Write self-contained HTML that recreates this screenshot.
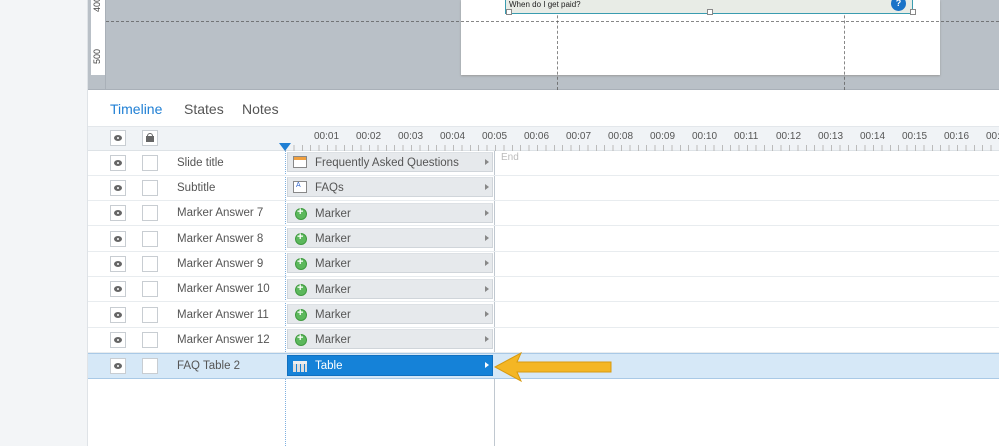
<!DOCTYPE html><html><head><style>
*{margin:0;padding:0;box-sizing:border-box}
body{width:999px;height:446px;overflow:hidden;background:#fff;font-family:"Liberation Sans",sans-serif;position:relative;color:#555}
.a{position:absolute}
.row{position:absolute;left:88px;width:911px;height:25px;border-bottom:1px solid #e8ecef}
.eye{position:absolute;left:22px;top:4px;width:16px;height:16px;border:1px solid #c8cdd2;background:#fff}
.eye:after{content:"";position:absolute;left:3px;top:4px;width:8px;height:6px;border-radius:50%;background:#666}
.eye:before{content:"";position:absolute;left:6px;top:6px;width:2px;height:2px;background:#fff;border-radius:50%;z-index:2}
.lk{position:absolute;left:54px;top:4px;width:16px;height:16px;border:1px solid #c8cdd2;background:#fff}
.nm{position:absolute;left:89px;top:6px;font-size:11.5px;color:#555}
.bar{position:absolute;left:287px;width:206px;height:20px;background:#e6e9ec;border:1px solid #d0d5da;border-top-color:#dde1e5;font-size:11.5px;color:#555}
.bar span{position:absolute;left:27px;top:4px}
.bar i{position:absolute;right:3px;top:6px;border-left:4px solid #888;border-top:3.5px solid transparent;border-bottom:3.5px solid transparent}
.pl{position:absolute;left:7px;top:4px;width:12px;height:12px;border-radius:50%;background:#5cb85c;border:1px solid #3f9a3f}
.pl:after{content:"+";position:absolute;left:1px;top:-3px;color:#fff;font-size:11px;font-weight:bold}
.tk{position:absolute;top:131px;font-size:10px;color:#555}
</style></head><body>
<div class="a" style="left:0;top:0;width:88px;height:446px;background:#f3f5f7;border-right:1px solid #dfe3e7"></div>
<div class="a" style="left:88px;top:0;width:911px;height:90px;background:#b9c0c7;border-bottom:1px solid #a9b0b8"></div>
<div class="a" style="left:91px;top:0;width:14px;height:75px;background:#fff"></div>
<div class="a" style="left:105px;top:0;width:1px;height:90px;background:#a9b0b8"></div>
<div class="a" style="left:92px;top:64px;font-size:9px;transform:rotate(-90deg);transform-origin:left top;color:#444">500</div>
<div class="a" style="left:92px;top:12px;font-size:9px;transform:rotate(-90deg);transform-origin:left top;color:#444">400</div>
<div class="a" style="left:461px;top:0;width:479px;height:75px;background:#fff;box-shadow:0 1px 2px #999"></div>
<div class="a" style="left:106px;top:21px;width:893px;border-top:1px dashed #555;opacity:.7"></div>
<div class="a" style="left:557px;top:0;height:90px;border-left:1px dashed #555;opacity:.7"></div>
<div class="a" style="left:844px;top:0;height:90px;border-left:1px dashed #555;opacity:.7"></div>
<div class="a" style="left:505px;top:0;width:408px;height:14px;background:#e8ece6;border:1px solid #3a9cb0;border-top:none"></div>
<div class="a" style="left:509px;top:0;font-size:8px;color:#222">When do I get paid?</div>
<div class="a" style="left:891px;top:-4px;width:15px;height:15px;border-radius:50%;background:#1a73c8;color:#fff;font-size:9px;font-weight:bold;text-align:center;line-height:15px">?</div>
<div class="a" style="left:506px;top:9px;width:6px;height:6px;border:1px solid #888;background:#fff"></div>
<div class="a" style="left:707px;top:9px;width:6px;height:6px;border:1px solid #888;background:#fff"></div>
<div class="a" style="left:910px;top:9px;width:6px;height:6px;border:1px solid #888;background:#fff"></div>
<div class="a" style="left:110px;top:101px;font-size:14px;color:#1f7fd4">Timeline</div>
<div class="a" style="left:184px;top:101px;font-size:14px;color:#555">States</div>
<div class="a" style="left:242px;top:101px;font-size:14px;color:#555">Notes</div>
<div class="a" style="left:88px;top:126px;width:911px;height:25px;background:#f0f3f6;border-top:1px solid #e3e7eb;border-bottom:1px solid #dde2e6"></div>
<div class="eye" style="left:110px;top:130px;background:#fff"></div>
<div class="a" style="left:142px;top:130px;width:16px;height:16px;border:1px solid #c8cdd2;background:#fff"><div class="a" style="left:3px;top:5px;width:8px;height:6px;background:#666"></div><div class="a" style="left:4px;top:2px;width:6px;height:5px;border:1.5px solid #666;border-bottom:none;border-radius:3px 3px 0 0"></div></div>
<div class="a" style="left:285px;top:145px;width:210px;height:6px;background:repeating-linear-gradient(90deg,#bbb 0 1px,transparent 1px 8.4px)"></div>
<div class="a" style="left:279px;top:143px;border-top:8px solid #1f7fd4;border-left:6px solid transparent;border-right:6px solid transparent"></div>
<div class="a" style="left:285px;top:151px;height:295px;border-left:1px dotted #7fb0e0"></div>
<div class="a" style="left:494px;top:151px;width:1px;height:295px;background:#c0c8d0"></div>
<div class="a" style="left:501px;top:152px;font-size:10px;color:#bbb">End</div>
<div class="row" style="top:151px"><div class="eye"></div><div class="lk"></div><div class="nm">Slide title</div></div>
<div class="row" style="top:176px"><div class="eye"></div><div class="lk"></div><div class="nm">Subtitle</div></div>
<div class="row" style="top:201px"><div class="eye"></div><div class="lk"></div><div class="nm">Marker Answer 7</div></div>
<div class="row" style="top:227px"><div class="eye"></div><div class="lk"></div><div class="nm">Marker Answer 8</div></div>
<div class="row" style="top:252px"><div class="eye"></div><div class="lk"></div><div class="nm">Marker Answer 9</div></div>
<div class="row" style="top:277px"><div class="eye"></div><div class="lk"></div><div class="nm">Marker Answer 10</div></div>
<div class="row" style="top:303px"><div class="eye"></div><div class="lk"></div><div class="nm">Marker Answer 11</div></div>
<div class="row" style="top:328px"><div class="eye"></div><div class="lk"></div><div class="nm">Marker Answer 12</div></div>
<div class="row" style="top:353px;background:#d6e8f7;border-top:1px solid #a9c9e6;border-bottom:1px solid #a9c9e6;height:26px"><div class="eye"></div><div class="lk"></div><div class="nm">FAQ Table 2</div></div>
<div class="bar" style="top:152px"><div class="a" style="left:5px;top:3px;width:14px;height:12px;border:1px solid #888;background:linear-gradient(#f0a040 0 3px,#fff 3px)"></div><span>Frequently Asked Questions</span><i></i></div>
<div class="bar" style="top:177px"><div class="a" style="left:5px;top:3px;width:14px;height:12px;border:1px solid #888;background:#fff;font-size:7px;color:#36c;padding-left:2px">A</div><span>FAQs</span><i></i></div>
<div class="bar" style="top:203px"><div class="pl"></div><span>Marker</span><i></i></div>
<div class="bar" style="top:228px"><div class="pl"></div><span>Marker</span><i></i></div>
<div class="bar" style="top:253px"><div class="pl"></div><span>Marker</span><i></i></div>
<div class="bar" style="top:279px"><div class="pl"></div><span>Marker</span><i></i></div>
<div class="bar" style="top:304px"><div class="pl"></div><span>Marker</span><i></i></div>
<div class="bar" style="top:329px"><div class="pl"></div><span>Marker</span><i></i></div>
<div class="bar" style="top:355px;height:21px;background:#1582d8;border-color:#1170bf;color:#fff"><div class="a" style="left:5px;top:5px;width:14px;height:11px;background:repeating-linear-gradient(90deg,#ddd 0 3px,#1582d8 3px 4px);border-top:3px solid #eee"></div><span>Table</span><i style="border-left-color:#fff"></i></div>
<svg class="a" style="left:493px;top:350px" width="122" height="34"><path d="M2 17 L28 3 L24 12 L118 12 L118 22 L24 22 L28 31 Z" fill="#f4b624" stroke="#d89a10" stroke-width="1"/></svg>
<div class="tk" style="left:314px">00:01</div><div class="tk" style="left:356px">00:02</div><div class="tk" style="left:398px">00:03</div><div class="tk" style="left:440px">00:04</div><div class="tk" style="left:482px">00:05</div><div class="tk" style="left:524px">00:06</div><div class="tk" style="left:566px">00:07</div><div class="tk" style="left:608px">00:08</div><div class="tk" style="left:650px">00:09</div><div class="tk" style="left:692px">00:10</div><div class="tk" style="left:734px">00:11</div><div class="tk" style="left:776px">00:12</div><div class="tk" style="left:818px">00:13</div><div class="tk" style="left:860px">00:14</div><div class="tk" style="left:902px">00:15</div><div class="tk" style="left:944px">00:16</div><div class="tk" style="left:986px">00:17</div>
<div class="a" style="left:495px;top:145px;width:504px;height:6px;background:repeating-linear-gradient(90deg,#bbb 0 1px,transparent 1px 8.4px)"></div>
</body></html>
